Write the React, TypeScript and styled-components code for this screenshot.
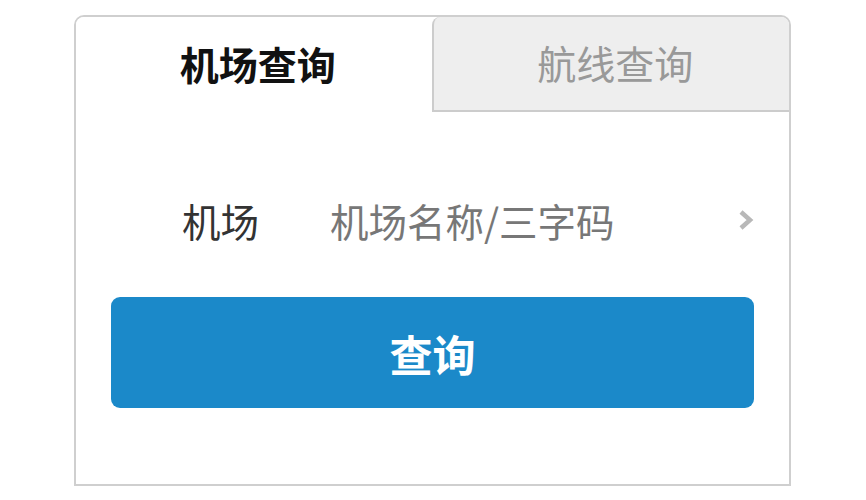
import React, { useState } from "react";
import styled, { createGlobalStyle } from "styled-components";

const GlobalStyle = createGlobalStyle`
  html, body {
    margin: 0;
    padding: 0;
    background: #ffffff;
  }
  body {
    font-family: "Noto Sans CJK SC", "Noto Sans", sans-serif;
  }
`;

const Page = styled.div`
  padding: 15px 0 0 74px;
`;

const Card = styled.div`
  box-sizing: border-box;
  width: 717px;
  height: 471px;
  border: 2px solid #cfcfcf;
  border-radius: 10px 10px 0 0;
  overflow: hidden;
  background: #ffffff;
`;

const Tabs = styled.div`
  display: flex;
  height: 95px;
`;

const Tab = styled.div<{ $active: boolean }>`
  box-sizing: border-box;
  flex: 1;
  display: flex;
  align-items: center;
  justify-content: center;
  font-size: 39px;
  line-height: 1;
  cursor: pointer;
  padding: 0 0 2px 8px;
  font-weight: ${(p) => (p.$active ? 700 : 400)};
  color: ${(p) => (p.$active ? "#111111" : "#999999")};
  background: ${(p) => (p.$active ? "#ffffff" : "#eeeeee")};
  border-left: ${(p) => (p.$active ? "none" : "2px solid #cccccc")};
  border-bottom: ${(p) => (p.$active ? "none" : "2px solid #cccccc")};
  border-top-left-radius: ${(p) => (p.$active ? "0" : "8px")};
`;

const Body = styled.div`
  padding: 58px 35px 0;
`;

const Row = styled.div`
  display: flex;
  align-items: center;
  height: 100px;
  padding-left: 71px;
`;

const Label = styled.div`
  width: 148px;
  font-size: 38.5px;
  color: #333333;
`;

const Placeholder = styled.div`
  flex: 1;
  font-size: 38.5px;
  color: #777777;
`;

const Chevron = styled.svg`
  width: 17px;
  height: 22px;
`;

const SearchButton = styled.button`
  display: block;
  width: 100%;
  height: 111px;
  margin-top: 27px;
  border: none;
  border-radius: 9px;
  background: #1b89c9;
  color: #ffffff;
  font-family: "Noto Sans CJK SC", "Noto Sans", sans-serif;
  font-size: 43px;
  font-weight: 700;
  cursor: pointer;
`;

export default function App() {
  const [tab, setTab] = useState(0);
  const tabs = ["机场查询", "航线查询"];

  return (
    <Page>
      <GlobalStyle />
      <Card>
        <Tabs>
          {tabs.map((t, i) => (
            <Tab key={t} $active={tab === i} onClick={() => setTab(i)}>
              {t}
            </Tab>
          ))}
        </Tabs>
        <Body>
          <Row>
            <Label>机场</Label>
            <Placeholder>机场名称/三字码</Placeholder>
            <Chevron viewBox="0 0 17 22">
              <path
                d="M4 3 L13 11 L4 19"
                fill="none"
                stroke="#b8b8b8"
                strokeWidth="4.5"
                strokeLinejoin="miter"
              />
            </Chevron>
          </Row>
          <SearchButton>查询</SearchButton>
        </Body>
      </Card>
    </Page>
  );
}
